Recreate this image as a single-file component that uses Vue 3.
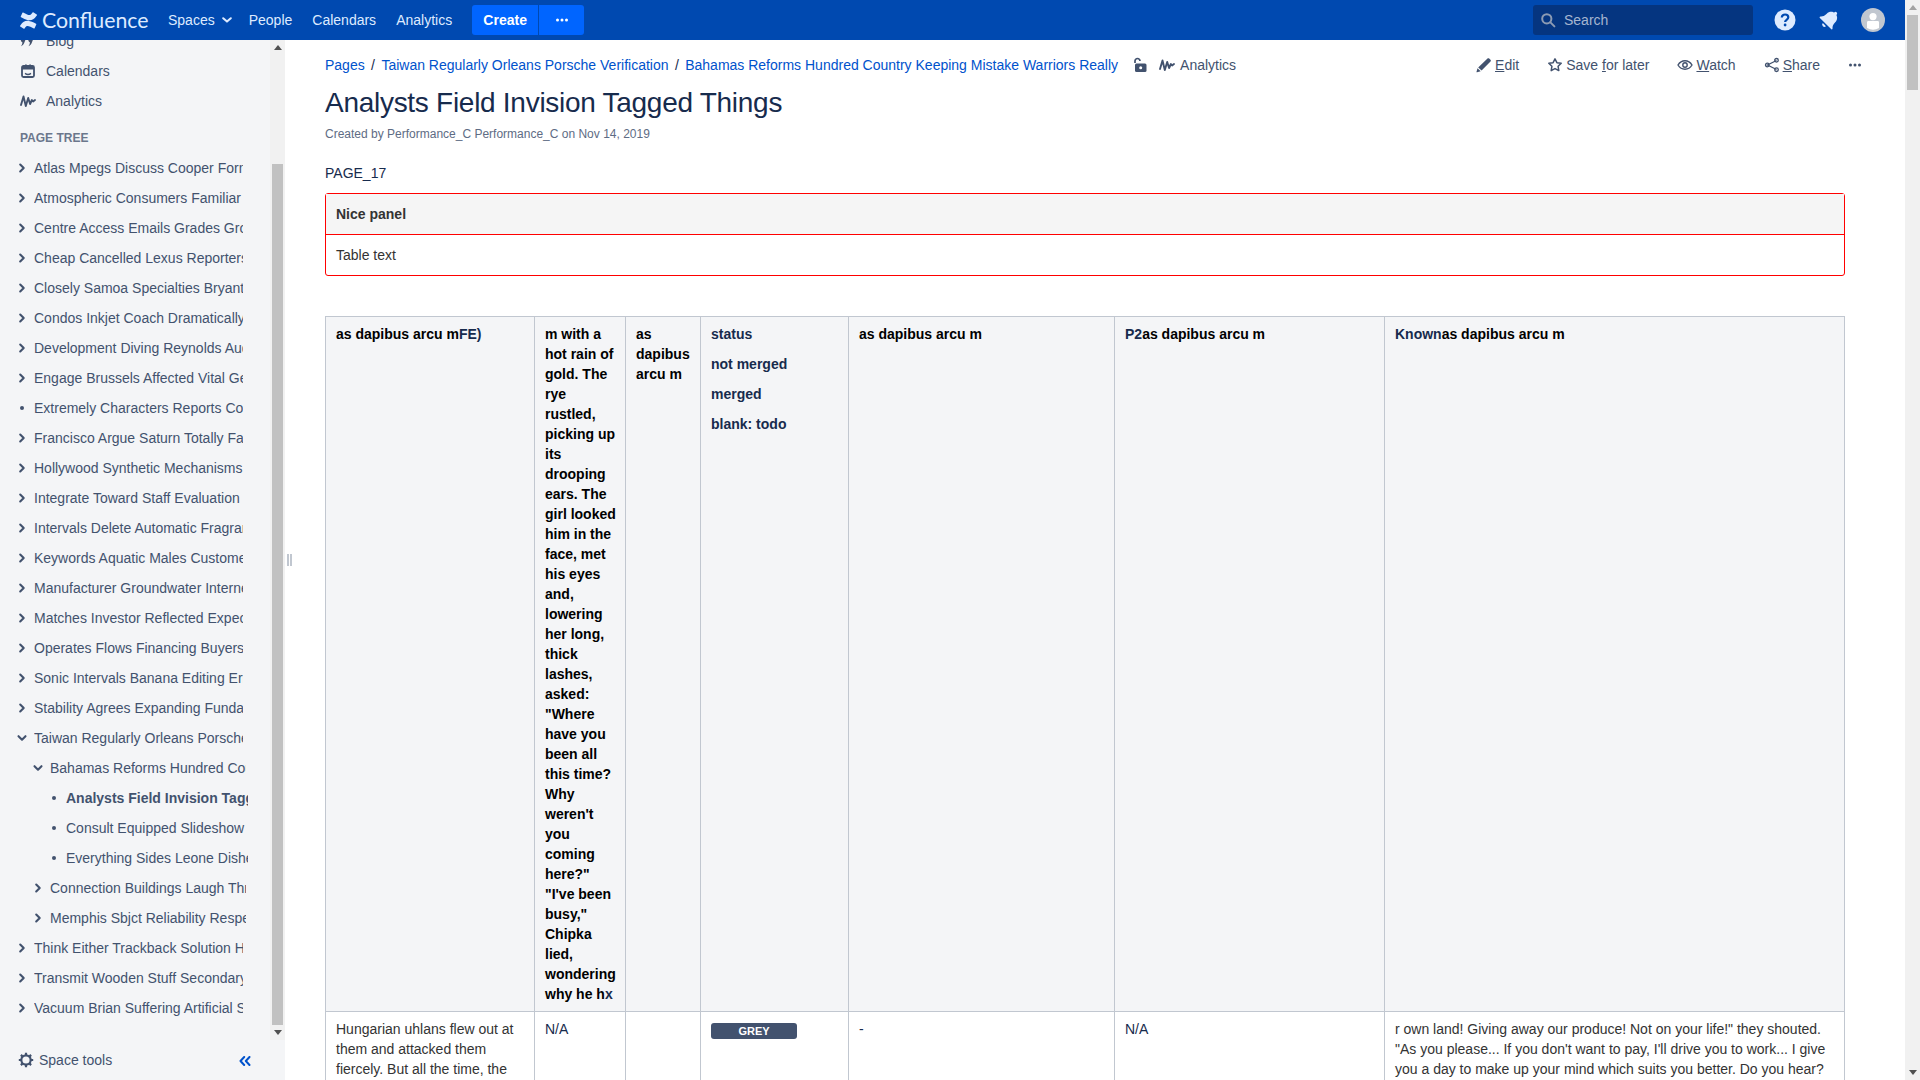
<template>
  <div class="app">
    <div class="page">
      <header class="topbar">
        <div class="logo">
          <svg class="logo-mark" viewBox="0 0 24 24" fill="#deebff">
            <path d="M.87 18.257c-.248.382-.53.875-.763 1.245a.764.764 0 0 0 .255 1.04l4.965 3.054a.764.764 0 0 0 1.058-.26c.199-.332.454-.763.733-1.221 1.967-3.247 3.945-2.853 7.508-1.146l4.957 2.337a.764.764 0 0 0 1.028-.382l2.364-5.346a.764.764 0 0 0-.382-1 599.851 599.851 0 0 1-4.965-2.361C10.911 10.97 5.6 11.185.87 18.257zM23.131 5.743c.249-.405.531-.875.764-1.25a.764.764 0 0 0-.256-1.034L18.675.404a.764.764 0 0 0-1.058.26c-.195.335-.451.763-.734 1.225-1.966 3.246-3.945 2.85-7.508 1.146L4.437.694a.764.764 0 0 0-1.027.382L1.046 6.422a.764.764 0 0 0 .382 1c1.039.49 3.105 1.467 4.965 2.361 6.698 3.246 12.009 3.044 16.738-4.04z" />
          </svg>
          <span class="logo-text">Confluence</span>
        </div>
        <nav class="topnav">
          <a class="topnav-item">
            Spaces
            <svg class="topnav-caret" viewBox="0 0 10 6"><path d="M1.2 1.2 5 4.6l3.8-3.4" fill="none" stroke="#deebff" stroke-width="2" stroke-linecap="round" stroke-linejoin="round" /></svg>
          </a>
          <a class="topnav-item">People</a>
          <a class="topnav-item">Calendars</a>
          <a class="topnav-item">Analytics</a>
        </nav>
        <div class="create-group">
          <button class="create-btn" type="button">Create</button>
          <button class="create-more" type="button" aria-label="More">
            <svg viewBox="0 0 14 4" width="14" height="4" fill="#fff"><circle cx="2.5" cy="2" r="1.5" /><circle cx="7" cy="2" r="1.5" /><circle cx="11.5" cy="2" r="1.5" /></svg>
          </button>
        </div>
        <div class="search">
          <svg viewBox="0 0 16 16" width="16" height="16"><circle cx="6.8" cy="6.8" r="4.6" fill="none" stroke="#8c9bb3" stroke-width="2" /><path d="m10.4 10.4 4 4" stroke="#8c9bb3" stroke-width="2" stroke-linecap="round" /></svg>
          <span class="search-text">Search</span>
        </div>
        <div class="top-icons">
          <svg viewBox="0 0 24 24" width="24" height="24"><circle cx="12" cy="12" r="10.5" fill="#deebff" /><path d="M8.8 9.6c0-1.900 1.400-3.100 3.300-3.100 1.900 0 3.200 1.200 3.200 2.800 0 2.400-3.200 2.500-3.200 4.600" fill="none" stroke="#0049b0" stroke-width="2.2" /><circle cx="12.1" cy="17" r="1.4" fill="#0049b0" /></svg>
          <svg viewBox="0 0 24 24" width="24" height="24" fill="#deebff">
            <g transform="rotate(45 12 12)">
              <circle cx="12" cy="2.800" r="1.600" />
              <path d="M12 3c-3.500 0-6 2.700-6 6.200 0 3.300-1 5-2.500 6.300-.6.600-.2 1.500.6 1.500h15.800c.8 0 1.200-.9.600-1.500C19 14.200 18 12.500 18 9.200 18 5.700 15.500 3 12 3z" />
              <path d="M9.800 18.500h4.400a2.200 2.200 0 0 1-4.400 0z" />
            </g>
          </svg>
          <div class="avatar">
            <svg viewBox="0 0 24 24" width="24" height="24"><circle cx="12" cy="12" r="12" fill="#c1c7d0" /><circle cx="12" cy="8.600" r="3.600" fill="#fff" /><path d="M6 14.300c0-.7.600-1.300 1.300-1.300h9.400c.7 0 1.300.6 1.300 1.300V20a12 12 0 0 1-12 0z" fill="#fff" /></svg>
          </div>
        </div>
      </header>

      <div class="body">
        <aside class="sidebar">
          <div class="side-scroll-area">
            <div class="side-content">
              <a class="side-link side-link-first">
                <svg class="side-icon" viewBox="0 0 16 16" fill="#42526e"><path d="M2 3h3.200c1 0 1.400 1 1 1.800L4.300 9.800C3.800 11.400 2.800 12.600 1 13.200c.9-1.200 1.300-2.400 1.400-4C1.200 8.800.5 7.800.8 5.200.9 4 1 3 2 3zM9.500 3h3.200c1 0 1.400 1 1 1.800l-1.900 5c-.5 1.600-1.500 2.800-3.300 3.400.9-1.200 1.300-2.400 1.400-4-1.200-.4-1.900-1.400-1.600-4C8.400 4 8.500 3 9.500 3z" /></svg>
                Blog
              </a>
              <a class="side-link">
                <svg class="side-icon" viewBox="0 0 16 16"><rect x="2" y="3" width="12" height="11" rx="1.500" fill="none" stroke="#42526e" stroke-width="1.800" /><path d="M2 3h12v3.500H2zM5 1.500h1.800V4H5zM9.200 1.500H11V4H9.200z" fill="#42526e" /><path d="M5 10.400c1.700 1.200 4.300 1.200 6 0" fill="none" stroke="#42526e" stroke-width="1.400" /></svg>
                Calendars
              </a>
              <a class="side-link">
                <svg class="side-icon" viewBox="0 0 16 16"><path d="M1 12 3.500 3.500l2.300 9.500 2.400-8 1.900 6 1.800-4 1.200 1.500L15 7" fill="none" stroke="#42526e" stroke-width="1.900" stroke-linecap="round" stroke-linejoin="round" /></svg>
                Analytics
              </a>
              <h5 class="tree-title">PAGE TREE</h5>
              <ul class="tree">
                <li v-for="item in tree" :key="item.label" class="tree-row" :class="'level-' + item.level">
                  <svg v-if="item.kind === 'closed'" class="tree-marker closed" viewBox="0 0 8 10"><path d="M2.200 1.500 5.700 5 2.200 8.500" fill="none" stroke="#42526e" stroke-width="2.100" stroke-linecap="round" stroke-linejoin="round" /></svg>
                  <svg v-else-if="item.kind === 'open'" class="tree-marker open" viewBox="0 0 10 8"><path d="M1.500 2.200 5 5.700l3.500-3.500" fill="none" stroke="#42526e" stroke-width="2.100" stroke-linecap="round" stroke-linejoin="round" /></svg>
                  <span v-else class="tree-bullet"></span>
                  <span class="tree-label" :class="{ current: item.current }">{{ item.label }}</span>
                </li>
              </ul>
            </div>
            <div class="scrollbar">
              <span class="arrow-up"></span>
              <div class="side-thumb-space"></div>
              <div class="scroll-thumb side-thumb"></div>
              <span class="arrow-down"></span>
            </div>
          </div>
          <div class="side-footer">
            <svg viewBox="0 0 16 16" width="16" height="16"><circle cx="8" cy="8" r="4.700" fill="none" stroke="#42526e" stroke-width="2.200" /><path d="M8 .8v2.400M8 12.800v2.400M.8 8h2.400M12.800 8h2.400M2.900 2.900l1.700 1.700M11.400 11.400l1.700 1.700M13.100 2.900l-1.700 1.700M4.600 11.400l-1.700 1.700" stroke="#42526e" stroke-width="2.200" /></svg>
            <span class="side-footer-text">Space tools</span>
            <svg class="collapse" viewBox="0 0 12 10" width="12" height="10"><path d="M5.200 1 1.500 5l3.700 4M10.500 1 6.800 5l3.700 4" fill="none" stroke="#0052cc" stroke-width="2" stroke-linecap="round" stroke-linejoin="round" /></svg>
          </div>
        </aside>

        <div class="splitter"><span class="grip"></span></div>

        <main class="main">
          <div class="crumb-bar">
            <ol class="crumbs">
              <li><a>Pages</a></li>
              <li><a>Taiwan Regularly Orleans Porsche Verification</a></li>
              <li><a>Bahamas Reforms Hundred Country Keeping Mistake Warriors Really</a></li>
            </ol>
            <svg class="lock" viewBox="0 0 14 16" width="14" height="16"><path d="M2 6V4a2.500 2.500 0 0 1 5 0" fill="none" stroke="#42526e" stroke-width="1.700" /><rect x="2" y="6.500" width="11.500" height="8.500" rx="1.500" fill="#42526e" /><circle cx="7.700" cy="10.700" r="1.500" fill="#fff" /></svg>
            <a class="crumb-analytics">
              <svg viewBox="0 0 16 16" width="16" height="16"><path d="M1 12 3.500 3.500l2.300 9.500 2.400-8 1.900 6 1.800-4 1.200 1.500L15 7" fill="none" stroke="#42526e" stroke-width="1.900" stroke-linecap="round" stroke-linejoin="round" /></svg>
              Analytics
            </a>
            <div class="actions">
              <a class="action action-edit">
                <svg viewBox="0 0 16 16" width="16" height="16" fill="#42526e"><path d="M11.500 1.500c.5-.5 1.200-.5 1.700 0l1.300 1.300c.5.500.5 1.200 0 1.700L5.600 13.400l-3.400-3zM1.500 11.300l3.200 3-3.600 1c-.4.100-.7-.2-.6-.6z" /></svg>
                <span><u>E</u>dit</span>
              </a>
              <a class="action action-save">
                <svg viewBox="0 0 16 16" width="16" height="16"><path d="m8 1.800 1.900 3.900 4.300.6-3.100 3 .7 4.300L8 11.600l-3.800 2 .7-4.300-3.100-3 4.300-.6z" fill="none" stroke="#42526e" stroke-width="1.500" stroke-linejoin="round" /></svg>
                <span>Save <u>f</u>or later</span>
              </a>
              <a class="action action-watch">
                <svg viewBox="0 0 16 16" width="16" height="16"><path d="M1 8c1.700-2.800 4-4.200 7-4.200s5.300 1.400 7 4.200c-1.700 2.800-4 4.200-7 4.200S2.700 10.800 1 8z" fill="none" stroke="#42526e" stroke-width="1.400" /><circle cx="8" cy="8" r="2.200" fill="none" stroke="#42526e" stroke-width="1.400" /></svg>
                <span><u>W</u>atch</span>
              </a>
              <a class="action action-share">
                <svg viewBox="0 0 16 16" width="16" height="16"><path d="M12.500 3.500 3.500 8l9 4.500" fill="none" stroke="#42526e" stroke-width="1.300" /><circle cx="12.500" cy="3.300" r="1.800" fill="none" stroke="#42526e" stroke-width="1.300" /><circle cx="3.300" cy="8" r="1.800" fill="none" stroke="#42526e" stroke-width="1.300" /><circle cx="12.500" cy="12.700" r="1.800" fill="none" stroke="#42526e" stroke-width="1.300" /></svg>
                <span><u>S</u>hare</span>
              </a>
              <a class="action action-more">
                <svg viewBox="0 0 14 4" width="14" height="4" fill="#42526e"><circle cx="2.500" cy="2" r="1.500" /><circle cx="7" cy="2" r="1.500" /><circle cx="11.500" cy="2" r="1.500" /></svg>
              </a>
            </div>
          </div>

          <h1 class="title">Analysts Field Invision Tagged Things</h1>
          <p class="byline">Created by Performance_C Performance_C on Nov 14, 2019</p>
          <p class="page-id">PAGE_17</p>

          <div class="panel">
            <div class="panel-head">Nice panel</div>
            <div class="panel-body">Table text</div>
          </div>

          <table class="data">
            <colgroup>
              <col class="c1" /><col class="c2" /><col class="c3" /><col class="c4" /><col class="c5" /><col class="c6" /><col class="c7" />
            </colgroup>
            <tbody>
              <tr>
                <th>as dapibus arcu m<span class="ink">FE)</span></th>
                <th>{{ storyHead }}<span class="ink">x</span></th>
                <th>as dapibus arcu m</th>
                <th class="status-cell">
                  <p>status</p>
                  <p>not merged</p>
                  <p>merged</p>
                  <p>blank: todo</p>
                </th>
                <th>as dapibus arcu m</th>
                <th><span class="ink">P2</span>as dapibus arcu m</th>
                <th><span class="ink">Known</span>as dapibus arcu m</th>
              </tr>
              <tr>
                <td class="plain">Hungarian uhlans flew out at them and attacked them fiercely. But all the time, the</td>
                <td>N/A</td>
                <td></td>
                <td><span class="lozenge">GREY</span></td>
                <td>-</td>
                <td>N/A</td>
                <td class="plain">r own land! Giving away our produce! Not on your life!" they shouted. "As you please... If you don't want to pay, I'll drive you to work... I give you a day to make up your mind which suits you better. Do you hear?</td>
              </tr>
            </tbody>
          </table>
        </main>
      </div>
    </div>

    <div class="scrollbar page-scroll">
      <span class="arrow-up"></span>
      <div class="scroll-thumb page-thumb"></div>
      <div class="page-scroll-rest"></div>
      <span class="arrow-down"></span>
    </div>
  </div>
</template>

<script setup>
const names = [
  "Atlas Mpegs Discuss Cooper Formats",
  "Atmospheric Consumers Familiar Keeping",
  "Centre Access Emails Grades Groups",
  "Cheap Cancelled Lexus Reporters Keeping",
  "Closely Samoa Specialties Bryant Keeping",
  "Condos Inkjet Coach Dramatically Keeping",
  "Development Diving Reynolds Audio",
  "Engage Brussels Affected Vital Genes",
  "Extremely Characters Reports Costs",
  "Francisco Argue Saturn Totally Famous",
  "Hollywood Synthetic Mechanisms Keeping",
  "Integrate Toward Staff Evaluation Keeping",
  "Intervals Delete Automatic Fragrance",
  "Keywords Aquatic Males Customers",
  "Manufacturer Groundwater Internet",
  "Matches Investor Reflected Expected",
  "Operates Flows Financing Buyers Keeping",
  "Sonic Intervals Banana Editing Error",
  "Stability Agrees Expanding Fundamental",
];

const tree = [
  ...names.map((label, i) => ({ label, level: 1, kind: i === 8 ? "leaf" : "closed" })),
  { label: "Taiwan Regularly Orleans Porsche Verification", level: 1, kind: "open" },
  { label: "Bahamas Reforms Hundred Country Keeping", level: 2, kind: "open" },
  { label: "Analysts Field Invision Tagged Things", level: 3, kind: "leaf", current: true },
  { label: "Consult Equipped Slideshow Keeping", level: 3, kind: "leaf" },
  { label: "Everything Sides Leone Dishes", level: 3, kind: "leaf" },
  { label: "Connection Buildings Laugh Through", level: 2, kind: "closed" },
  { label: "Memphis Sbjct Reliability Respect", level: 2, kind: "closed" },
  { label: "Think Either Trackback Solution Hours", level: 1, kind: "closed" },
  { label: "Transmit Wooden Stuff Secondary Keeping", level: 1, kind: "closed" },
  { label: "Vacuum Brian Suffering Artificial Steel", level: 1, kind: "closed" },
];

const storyHead =
  'm with a hot rain of gold. The rye rustled, picking up its drooping ears. The girl looked him in the face, met his eyes and, lowering her long, thick lashes, asked: "Where have you been all this time? Why weren\'t you coming here?" "I\'ve been busy," Chipka lied, wondering why he h';
</script>

<style>
html,
body {
  margin: 0;
  overflow: hidden;
}
</style>

<style scoped>
.app {
  display: flex;
  height: 100vh;
  overflow: hidden;
  font-family: "Liberation Sans", Arial, sans-serif;
  font-size: 14px;
  line-height: 20px;
  color: #172b4d;
  background: #fff;
}

.page {
  flex: 1;
  min-width: 0;
  display: flex;
  flex-direction: column;
}

/* top bar */
.topbar {
  height: 40px;
  flex: none;
  display: flex;
  align-items: center;
  background: #0049b0;
  color: #deebff;
}

.logo {
  display: flex;
  align-items: center;
  margin-left: 20px;
  width: 148px;
}

.logo-mark {
  width: 17px;
  height: 17px;
}

.logo-text {
  margin-left: 5px;
  font-family: Lato, sans-serif;
  font-size: 21.3px;
}

.topnav {
  display: flex;
  align-items: center;
  gap: 20px;
}

.topnav-item {
  display: flex;
  align-items: center;
}

.topnav-caret {
  width: 10px;
  height: 6px;
  margin-left: 7px;
  margin-right: -3px;
}

.create-group {
  display: flex;
  margin-left: 20px;
  height: 30px;
}

.create-btn,
.create-more {
  border: 0;
  background: #0065ff;
  color: #fff;
  font: bold 14px "Liberation Sans", Arial, sans-serif;
  padding: 0;
  display: flex;
  align-items: center;
  justify-content: center;
}

.create-btn {
  width: 66px;
  border-radius: 3px 0 0 3px;
  margin-right: 1px;
}

.create-more {
  width: 45px;
  border-radius: 0 3px 3px 0;
}

.search {
  margin-left: auto;
  width: 220px;
  height: 30px;
  box-sizing: border-box;
  padding-left: 7px;
  display: flex;
  align-items: center;
  gap: 8px;
  background: #053580;
  border-radius: 3px;
}

.search-text {
  color: #a5b5d0;
}

.top-icons {
  display: flex;
  align-items: center;
  gap: 20px;
  margin-left: 20px;
  margin-right: 20px;
}

.avatar {
  height: 24px;
}

/* sidebar */
.body {
  flex: 1;
  min-height: 0;
  display: flex;
}

.sidebar {
  width: 285px;
  flex: none;
  display: flex;
  flex-direction: column;
  background: #f4f5f7;
  color: #42526e;
}

.side-scroll-area {
  height: 1000px;
  flex: none;
  display: flex;
  overflow: hidden;
}

.side-content {
  flex: 1;
  min-width: 0;
}

.side-link {
  display: flex;
  align-items: center;
  height: 30px;
  padding-left: 20px;
}

.side-link-first {
  margin-top: -14px;
}

.side-icon {
  width: 16px;
  height: 16px;
  margin-right: 10px;
}

.tree-title {
  margin: 12px 0 0 20px;
  font-size: 12px;
  line-height: 20px;
  font-weight: 700;
  color: #6b778c;
}

.tree {
  list-style: none;
  margin: 5px 0 0;
  padding: 0;
}

.tree-row {
  display: flex;
  align-items: center;
  height: 30px;
}

.tree-marker {
  flex: none;
}

.tree-marker.closed {
  width: 8px;
  height: 10px;
}

.tree-marker.open {
  width: 10px;
  height: 8px;
  margin: 0 -1px;
}

.tree-bullet {
  flex: none;
  width: 4px;
  height: 4px;
  margin: 0 2px;
  border-radius: 50%;
  background: #42526e;
}

.level-1 {
  padding-left: 18px;
}

.level-2 {
  padding-left: 34px;
}

.level-3 {
  padding-left: 50px;
}

.tree-label {
  margin-left: 8px;
  white-space: nowrap;
  overflow: hidden;
}

.level-1 .tree-label {
  width: 209px;
}

.level-2 .tree-label {
  width: 196px;
}

.level-3 .tree-label {
  width: 182px;
}

.current {
  font-weight: 700;
}

.side-footer {
  flex: 1;
  display: flex;
  align-items: center;
  padding: 0 0 0 18px;
}

.side-footer-text {
  margin-left: 5px;
}

.collapse {
  margin-left: auto;
  margin-right: 34px;
  margin-top: 2px;
}

.scrollbar {
  width: 15px;
  flex: none;
  display: flex;
  flex-direction: column;
  align-items: center;
  background: #f1f1f1;
  box-sizing: border-box;
}

.arrow-up,
.arrow-down {
  flex: none;
  width: 0;
  height: 0;
  margin: 5px 0;
  border-left: 4px solid transparent;
  border-right: 4px solid transparent;
}

.arrow-up {
  border-bottom: 5px solid #505050;
}

.arrow-down {
  border-top: 5px solid #505050;
}

.scroll-thumb {
  width: 11px;
  background: #c1c1c1;
}

.side-thumb-space {
  height: 109px;
  flex: none;
}

.side-thumb {
  flex: 1;
}

.page-scroll .arrow-up {
  border-bottom-color: #a3a3a3;
}

.page-thumb {
  height: 75px;
  flex: none;
}

.page-scroll-rest {
  flex: 1;
}

.splitter {
  flex: none;
  width: 40px;
  margin-right: -40px;
  position: relative;
}

.grip {
  position: absolute;
  left: 2px;
  top: 514px;
  width: 1px;
  height: 12px;
  border-left: 2px solid #c1c7d0;
  border-right: 2px solid #c1c7d0;
}

/* main */
.main {
  flex: 1;
  min-width: 0;
  overflow: hidden;
  padding: 0 60px 0 40px;
  box-sizing: border-box;
}

.crumb-bar {
  height: 50px;
  display: flex;
  align-items: center;
}

.crumbs {
  list-style: none;
  display: flex;
  margin: 0;
  padding: 0;
  color: #0052cc;
}

.crumbs li + li::before {
  content: "/";
  color: #172b4d;
  margin: 0 6.4px;
}

.lock {
  margin-left: 15px;
}

.crumb-analytics {
  display: flex;
  align-items: center;
  gap: 5px;
  margin-left: 12px;
  color: #42526e;
}

.actions {
  margin-left: auto;
  margin-right: -17px;
  display: flex;
  align-items: center;
  color: #42526e;
}

.action {
  display: flex;
  align-items: center;
  gap: 3px;
}

.action-save,
.action-watch,
.action-share,
.action-more {
  margin-left: 28px;
}

.title {
  margin: -5px 0 0;
  font-size: 28px;
  line-height: 36px;
  font-weight: 400;
  letter-spacing: -0.01em;
}

.byline {
  margin: 5px 0 0;
  font-size: 12px;
  line-height: 16px;
  color: #5e6c84;
}

.page-id {
  margin: 21px 0 0;
}

.panel {
  margin-top: 10px;
  border: 1px solid #f00;
  border-radius: 3px;
  color: #333;
}

.panel-head {
  height: 41px;
  box-sizing: border-box;
  padding: 10px;
  background: #f5f5f5;
  border-bottom: 1px solid #f00;
  font-weight: 700;
}

.panel-body {
  padding: 10px;
  height: 40px;
  box-sizing: border-box;
}

.data {
  margin-top: 40px;
  width: 1520px;
  table-layout: fixed;
  border-collapse: collapse;
}

.c1 { width: 209px; }
.c2 { width: 91px; }
.c3 { width: 75px; }
.c4 { width: 148px; }
.c5 { width: 266px; }
.c6 { width: 270px; }
.c7 { width: 460px; }

.data th,
.data td {
  border: 1px solid #c1c7d0;
  padding: 7px 8px 7px 10px;
  vertical-align: top;
  text-align: left;
}

.data th {
  background: #f4f5f7;
  font-weight: 700;
  color: #000;
}

.ink {
  color: #172b4d;
}

.status-cell p {
  margin: 0 0 10px;
  color: #172b4d;
}

.status-cell p:last-child {
  margin-bottom: 0;
}

.data .plain {
  color: #333;
}

.lozenge {
  display: block;
  width: 86px;
  margin-top: 4px;
  height: 16px;
  line-height: 16px;
  border-radius: 3px;
  background: #42526e;
  color: #fff;
  font-size: 11px;
  font-weight: 700;
  text-align: center;
}
</style>
